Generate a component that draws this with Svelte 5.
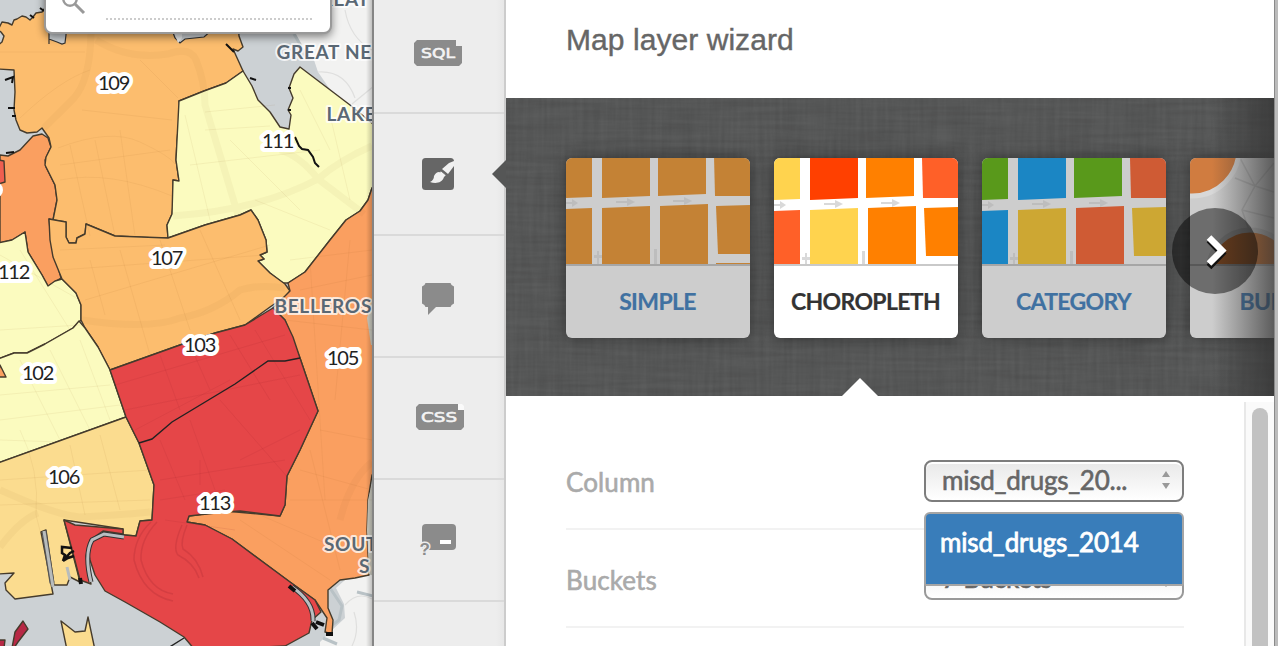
<script>
  const O = '#fcbd6e', Y = '#fbfbbf', R = '#e54648', D = '#fa9f60', T = '#fbdc8f';

  const regions = [
    { fill: D, pts: '0,155 8,156 20,150 33,136 42,134 48,138 51,147 45,160 46,167 55,185 57,200 53,220 49,219 51,240 61,278 48,286 42,275 28,252 25,232 12,240 0,243' },
    { fill: '#ef5f50', pts: '-2,160 4,161 5,182 -2,184' },
    { fill: O, pts: '-2,45 2,42 4,36 1,32 -2,30 2,22 8,23 12,25 14,20 17,19 22,16 26,17 30,20 33,17 36,13 42,12 45,8 48,6 48,-3 236,-3 239,36 243,47 238,51 233,49 243,71 226,83 204,91 179,101 180,112 177,140 176,160 179,181 173,180 173,205 172,214 167,225 168,238 155,238 115,236 86,224 85,234 77,238 76,243 69,243 66,237 66,222 53,220 57,200 55,185 45,165 46,157 51,147 49,138 42,128 37,132 27,133 20,130 16,120 14,110 15,92 14,70 -2,69' },
    { fill: Y, pts: '179,101 204,91 226,83 243,71 252,86 258,100 270,112 280,127 289,129 291,115 288,110 293,98 289,88 294,74 300,67 350,105 378,128 378,183 372,188 368,200 360,211 346,220 330,240 305,272 288,283 283,283 270,273 258,261 264,259 260,255 267,252 266,240 258,220 251,210 240,215 205,225 168,238 167,225 172,214 173,180 179,181 176,160 177,140' },
    { fill: Y, pts: '-2,243 12,240 25,232 28,252 42,275 48,286 55,281 62,279 76,293 81,305 81,320 73,328 45,344 27,353 14,353 -2,359' },
    { fill: O, pts: '49,219 66,222 66,237 69,243 76,243 77,238 85,234 86,224 115,236 168,238 205,225 240,215 251,210 258,220 266,240 267,252 260,255 264,259 258,261 270,273 285,284 290,291 286,296 270,307 245,325 215,333 180,345 110,370 98,347 85,328 81,320 81,305 76,293 62,279 53,257 50,240' },
    { fill: Y, pts: '-2,359 14,353 27,353 45,344 73,328 79,321 85,328 98,347 110,370 126,417 -2,463' },
    { fill: D, pts: '0,365 6,377 -2,377' },
    { fill: D, pts: '288,283 305,272 330,240 346,220 360,211 368,200 372,188 378,183 378,470 372,475 368,500 367,530 369,575 355,578 340,580 328,590 328,608 333,620 332,634 325,632 327,618 315,600 290,582 232,539 205,525 187,522 189,516 225,511 280,516 285,505 287,476 300,450 318,411 300,358 285,320 273,308 290,291' },
    { fill: T, pts: '-2,463 126,417 139,443 154,485 152,520 140,521 136,536 123,535 123,529 64,520 80,582 70,577 67,585 54,585 46,530 41,532 53,594 15,599 6,590 5,583 14,573 -2,574' },
    { fill: R, pts: '110,370 180,345 215,333 245,325 273,308 285,320 293,337 300,358 318,411 300,450 287,476 285,505 280,516 240,511 225,512 189,516 187,522 205,525 232,539 290,582 315,600 321,612 312,620 309,633 285,646 195,650 184,637 160,622 125,602 105,591 95,575 90,560 87,545 90,540 103,533 136,536 140,521 152,520 154,485 139,443 126,417' },
    { fill: R, pts: '64,520 75,525 123,529 123,534 103,531 90,540 86,556 91,584 80,580 73,553' },
    { fill: T, pts: '61,621 75,632 85,631 88,617 95,650 67,650' },
    { fill: '#b72945', pts: '12,648 15,632 23,621 28,629 18,642 14,648' },
    { fill: '#b72945', pts: '-2,640 5,640 4,648 -2,648' }
  ];

  const labels = [
    ['109', 113.5, 89.5], ['111', 277.5, 147.5], ['107', 166.5, 264.5], ['112', 13.5, 279],
    ['103', 199.5, 351.5], ['105', 342.5, 364.5], ['102', 37.5, 379.5], ['106', 63.5, 483.5], ['113', 214.5, 509.5]
  ];
  const places = [
    ['GREAT', 306, 6], ['GREAT NE', 276.5, 59], ['LAKE', 326.5, 121],
    ['BELLEROS', 274.5, 313], ['SOUT', 324, 551], ['S', 359, 572.5]
  ];

  const cards = [
    { name: 'SIMPLE', c: Array(8).fill('#c48235'), up: 2 },
    { name: 'CHOROPLETH', on: true, c: ['#ffd34e', '#ff4000', '#ff8000', '#ff6028', '#ff6028', '#ffd34e', '#ff8000', '#ff8000'], up: 0 },
    { name: 'CATEGORY', c: ['#59991b', '#1b86c4', '#59991b', '#cf5b34', '#1b86c4', '#cda733', '#cf5b34', '#cda733'], up: 0 },
    { name: 'BUBBLE', bubble: true, c: [], up: 0 }
  ];
  const tiles = [
    '0,0 26,0 26,41 0,42', '36,0 84,0 84,40 36,42', '92,0 140,0 140,38 92,40', '148,0 184,0 184,40 149,40',
    '0,53 26,52 26,108 0,108', '36,52 84,50 84,108 36,108', '94,50 142,48 142,108 94,108', '150,50 184,49 184,98 152,98'
  ];
</script>

<div class="app">
  <section class="map">
    <svg class="mapart" width="372" height="646" viewBox="0 0 372 646">
      <rect width="372" height="646" fill="#ccd1d4" />
      <path fill="#f2f2f1" d="M296 0V34L302 46L314 60L318 72L340 104L374 130V0Z" />
      <path fill="#f2f2f1" d="M374 574L345 580L336 588L344 604L345 618L332 630L320 642V646H374Z" />
      <path fill="none" stroke="#b9c2c6" stroke-width="3" d="M330 588l12 18-3 14-8 6m26-34l16 4m-50 42l14 6M294 34l7 12" />
      <path fill="none" stroke="#dfdfde" stroke-width="1.2" d="M345 10Q350 38 372 50M318 72Q345 70 355 98M352 104L374 86M345 605Q358 590 374 600M352 646Q360 630 354 612" />
      {#each regions as r}
        <polygon points={r.pts} fill={r.fill} stroke="#453b2c" stroke-width="1.4" stroke-linejoin="round" />
      {/each}
      <g fill="#ccd1d4" stroke="#333" stroke-width="1.2">
        <path d="M49 30V44L49 39L57 42L62 44L65 43L66 35V30ZM172 30L175 38L180 43L185 39L204 37L212 30Z" />
      </g>
      <path fill="#e9ebec" d="M174 32h8v6l-4 5Z" />
      <g fill="#c8c8bd" stroke="none">
        <path d="M367 318L374 294V345H371Z" />
        <path d="M374 475L368 500L367 530L369 574L374 576Z" />
      </g>
      <g fill="none" stroke="#8a5a20" stroke-opacity=".07" stroke-width="1">
        <path stroke-width="7" stroke-opacity=".05" d="M91 34Q90 80 74 98Q50 122 44 128M96 40Q128 60 168 54Q190 46 196 60Q205 82 205 105L238 215M173 216Q260 210 318 179Q340 160 372 146M318 179L364 214M318 179Q300 156 280 150M82 320Q150 330 180 318Q214 312 240 290Q260 284 285 288M0 490Q55 515 80 517Q120 515 150 512M0 547Q20 520 38 513M340 520Q350 480 372 462" />
        <path d="M0 52H85M20 118Q60 80 90 70M58 148Q110 128 140 142T175 164M60 165L170 150M60 180Q110 170 172 196M82 110L172 120M140 60L178 98M70 145L90 236M95 140L115 236M120 130L135 236M185 115L210 220M205 112L275 105M205 130L270 126M300 90L330 150M330 115L350 200M230 140L300 210M190 165L320 150M255 200L330 230M60 250L165 245M90 260L105 315M85 300L270 245M120 250L150 355M160 240L190 330M200 230L240 320M60 270L265 255M0 255L80 300M0 330L80 325M20 250L70 330M0 395L110 385M0 420L120 405M20 360L60 440M50 350L90 430M80 340L110 420M0 440L60 442M20 430Q40 470 36 515L50 570M70 445L85 515M100 435L120 510M0 480L150 470M0 505L150 500M290 260L372 250M300 290L372 275M310 260L325 500M350 240L335 400M285 320L372 330M320 430L372 440M300 470L372 490M290 500L372 500M240 520L330 580M260 515L330 545M310 450L340 570" />
      </g>
      <g fill="none" stroke="#8b1c28" stroke-opacity=".1" stroke-width="1">
        <path d="M115 385L285 335M125 410L300 375M135 430L230 380M160 355L180 410M190 345L210 390M230 335L270 400M255 330L310 420M160 440L185 500M190 420L215 490M220 400L290 480M160 480L285 460M160 500L225 490M200 460V485M240 460L300 430M165 520L235 530" />
        <path stroke-width="1.5" stroke-opacity=".18" d="M151 522Q134 538 134 560Q143 595 173 601M157 522Q140 540 141 560Q149 590 173 594M182 525Q172 548 178 555Q194 563 199 578M187 525Q180 542 183 549Q198 558 203 577" />
      </g>
      <path fill="none" stroke="#222" stroke-width="1.4" d="M139 443L152 439L172 422L235 384L268 361L285 361L300 358M168 648L184 638" />
      <path fill="none" stroke="#111" stroke-width="2" d="M295 137L299 146L302 149L308 150L313 157L315 163L319 167M250 78L256 80M226 44L234 52M288 88h3M288 110h3M5 80l8-3-1 6M8 108l7 0M12 116h4M30 15l4 3M40 8l4 3M6 153l8-1" />
      <g fill="none">
        <path stroke="#333" stroke-width="5" d="M124 537L104 534L92 540Q84 554 91 582M292 587Q314 602 313 621" />
        <path stroke="#b9bec1" stroke-width="3" d="M124 537L104 534L92 540Q84 554 91 582M292 587Q314 602 313 621" />
        <path stroke="#555" stroke-width="5" d="M44 531L52 583" />
        <path stroke="#b8bcbc" stroke-width="3" d="M44 531L53 587M67 567L70 580" />
        <path stroke="#111" stroke-width="2.5" d="M72 548L62 547V553L65 555L63 561L70 553L74 551M63 561L68 558L74 556" />
        <path stroke="#111" stroke-width="4" d="M289 586l6 5M312 623l5 6M316 622l8 3M80 578l1 6M326 634h7" />
      </g>
      <circle cx="-5" cy="190" r="8" fill="#fff" />
      <g class="places">
        {#each places as [t, x, y]}<text {x} {y}>{t}</text>{/each}
      </g>
      <g class="labels">
        {#each labels as [t, x, y]}<text {x} {y}>{t}</text>{/each}
      </g>
    </svg>
    <div class="search">
      <svg width="24" height="26" viewBox="0 0 24 26"><circle cx="8" cy="8" r="6.7" fill="none" stroke="#999" stroke-width="2.4" /><path d="M13 13L22 22" stroke="#999" stroke-width="3" /></svg>
      <span></span>
    </div>
  </section>

  <nav class="rail">
    <div class="tab first">
      <svg width="48" height="26" viewBox="0 0 48 26"><path fill="#8b8b8b" d="M3 0H42V6H48V23L45 26H3L0 23V3Z" /><text x="7" y="18.3" textLength="34" lengthAdjust="spacingAndGlyphs">SQL</text></svg>
    </div>
    <div class="tab">
      <svg width="32" height="32" viewBox="0 0 32 32"><rect width="32" height="32" rx="3.5" fill="#666" /><path fill="#f0f0f0" d="M32 3V8L26 16L20 11L27 5ZM19 13L24 17L22 19L18 15ZM17 14Q22 15 22 19C20 25 14 26 8 24Q12 22 12 18Q14 14 17 14Z" /><path fill="none" stroke="#666" d="M18 12L25 18" /></svg>
      <i class="notch"></i>
    </div>
    <div class="tab">
      <svg class="low" width="32" height="32" viewBox="0 0 32 32"><path fill="#8b8b8b" d="M3.5 0H28.500Q29 2.500 32 3.500V20.500Q29 21.500 28.500 24H14L6 32V24H3.500Q3 21.500 0 20.500V3.500Q3 2.500 3.500 0Z" /></svg>
    </div>
    <div class="tab">
      <svg class="css" width="48" height="26" viewBox="0 0 48 26"><path fill="#8b8b8b" d="M3 0H42V6H48V23L45 26H3L0 23V3Z" /><path fill="#fafafa" d="M42 0h4l2 2v4h-6Z" /><text x="5" y="18.3" textLength="36" lengthAdjust="spacingAndGlyphs">CSS</text></svg>
    </div>
    <div class="tab">
      <svg width="36" height="32" viewBox="0 0 36 32"><rect x="2" width="34" height="26" rx="4" fill="#8b8b8b" /><rect x="20" y="16" width="11" height="4" fill="#fff" /><text class="q" x="-.5" y="30.5">?</text></svg>
    </div>
    <div class="tab"><svg class="last" width="10" height="10"><circle cx="5" cy="5" r="4" fill="#8b8b8b" /></svg></div>
  </nav>

  <main>
    <header><h1>Map layer wizard</h1></header>
    <div class="strip">
      <svg class="linen" width="768" height="298">
        <filter id="h" x="0" y="0" width="100%" height="100%"><feTurbulence type="fractalNoise" baseFrequency=".015 .22" numOctaves="2" seed="3" /><feColorMatrix values="0 0 0 0 0  0 0 0 0 0  0 0 0 0 0  1 0 0 0 -.3" /></filter>
        <filter id="v" x="0" y="0" width="100%" height="100%"><feTurbulence type="fractalNoise" baseFrequency=".22 .015" numOctaves="2" seed="8" /><feColorMatrix values="0 0 0 0 0  0 0 0 0 0  0 0 0 0 0  1 0 0 0 -.3" /></filter>
        <rect width="768" height="298" filter="url(#h)" opacity=".14" /><rect width="768" height="298" filter="url(#v)" opacity=".12" />
      </svg>
      <div class="cards">
        {#each cards as card}
          <article class:on={card.on}>
            <svg width="184" height="106" viewBox="0 0 184 106">
              {#if card.bubble}
                <path fill="none" stroke="#999" stroke-opacity=".4" stroke-width="1.5" d="M50 0L65 28L84 5M65 28L52 52L60 75M65 28L84 34M52 52L84 60M45 20L65 28" />
                <circle cx="2" cy="-9" r="47" fill="#d07c40" stroke="#d8d8d8" stroke-width="5" />
                <circle cx="60" cy="114" r="42" fill="#c27035" stroke="#bbb" stroke-width="5" />
              {:else}
                <g transform="translate(0 {-card.up})">
                  {#each tiles as t, i}<polygon points={t} fill={card.c[i]} />{/each}
                  {#if card.name === 'SIMPLE'}<path fill={card.c[0]} d="M150 107h34v4h-34Z" />{/if}
                  <path fill="#aaa" fill-opacity=".45" d="M0 46h6v-3l6 4-6 4v-3H0ZM50 45h11v-3l8 4-8 4v-3H50ZM107 44h11v-3l8 4-8 4v-3h-11ZM31 95h2v4h3v3h-3v8h-2v-8h-3v-3h3ZM88 93h3v17h-3Z" />
                </g>
              {/if}
            </svg>
            <b>{card.name}</b>
          </article>
        {/each}
      </div>
      <div class="fade"></div>
      <div class="next"><svg width="24" height="36" viewBox="0 0 24 36"><path fill="none" stroke="#111" stroke-width="6.5" d="M4 5L17 18.5L4 32" /><path fill="none" stroke="#fff" stroke-width="6.5" d="M4 2.5L17 15.5L4 28.5" /></svg></div>
      <i class="pointer"></i>
    </div>
    <div class="body">
      <div class="form">
        <div class="row"><label for="column">Column</label>
          <div class="select focus" id="column"><span>misd_drugs_20...</span><svg width="10" height="18" viewBox="0 0 10 18"><path fill="#999" d="M5 0L9 6H1ZM1 12H9L5 18Z" /></svg>
            <div class="menu">misd_drugs_2014</div>
          </div>
        </div>
        <div class="row"><label for="buckets">Buckets</label>
          <div class="select" id="buckets"><span>7 Buckets</span><svg width="10" height="18" viewBox="0 0 10 18"><path fill="#777" d="M5 0L9 6H1ZM1 12H9L5 18Z" /></svg></div>
        </div>
      </div>
      <div class="scroll"><i></i></div>
    </div>
  </main>
  <div class="edge"></div>
</div>

<style>
  :global(body) { overflow: hidden; }
  .app { width: 1278px; height: 646px; display: flex; overflow: hidden; background: #fff; font-family: Lato, sans-serif; }
  .map { position: relative; width: 372px; height: 646px; flex: none; overflow: hidden; border-right: 2px solid #858585; }
  .map::after { content: ''; position: absolute; inset: 0 0 0 auto; width: 6px; background: linear-gradient(90deg, transparent, #0003); }
  .mapart { display: block; }
  .mapart text { paint-order: stroke; stroke: #fff; stroke-linejoin: round; }
  .labels text { font: 400 20px Lato, sans-serif; letter-spacing: -1.2px; text-anchor: middle; fill: #222; stroke-width: 8px; }
  .places text { font: 700 19px Lato, sans-serif; letter-spacing: .7px; fill: #5a6874; stroke-width: 4px; stroke-opacity: .75; }
  .search { position: absolute; left: 44px; top: -20px; box-sizing: border-box; width: 288px; height: 54px; border: 2px solid #999; border-radius: 0 0 8px 8px; background: #fff; box-shadow: 0 3px 8px #0007; }
  .search svg { position: absolute; left: 16px; top: 9px; }
  .search span { position: absolute; left: 60px; top: 36px; width: 207px; height: 2px; background: repeating-linear-gradient(90deg, #ccc 0 2px, transparent 2px 4px); }

  .rail { width: 130px; flex: none; background: linear-gradient(90deg, #ededed 122px, #e7e7e7); border-right: 2px solid #ccc; }
  .tab { position: relative; box-sizing: border-box; height: 122px; border-bottom: 2px solid #dadada; display: flex; justify-content: center; align-items: center; padding-right: 2px; }
  .tab.first { height: 114px; padding-bottom: 6px; }
  .tab text { font: 400 14.5px "DejaVu Sans", sans-serif; fill: #f4f4f4; stroke: #f4f4f4; stroke-width: .6px; }
  .tab .q { font: 700 17px "Liberation Sans", sans-serif; fill: #8b8b8b; stroke: #ededed; stroke-width: 3px; paint-order: stroke; }
  .low { margin-top: 6px; }
  .css { margin-left: 4px; margin-top: -2px; }
  .last { margin-top: -20px; }
  .notch { position: absolute; right: -2px; top: 46px; border: solid transparent; border-width: 14px 14px 14px 0; border-right-color: #555656; }

  main { width: 768px; flex: none; height: 646px; display: flex; flex-direction: column; overflow: hidden; }
  header { height: 98px; flex: none; padding-left: 60px; box-sizing: border-box; }
  h1 { margin: 0; padding-top: 22px; font: 400 30px/36px "Liberation Sans", sans-serif; color: #666; letter-spacing: .06px; -webkit-text-stroke: .4px #666; }
  .strip { position: relative; height: 298px; flex: none; box-sizing: border-box; padding: 60px 0 0 60px; overflow: hidden; background: #5b5c5c; }
  .linen { position: absolute; inset: 0; }
  .cards { position: relative; display: flex; gap: 24px; }
  article { width: 184px; height: 180px; flex: none; border-radius: 6px; overflow: hidden; background: #cdcdcd; color: #4071a1; box-shadow: 0 0 16px #0006; display: flex; flex-direction: column; }
  article svg { display: block; border-bottom: 2px solid #a6a6a6; flex: none; }
  article b { flex: 1; display: flex; align-items: center; justify-content: center; font-weight: 700; font-size: 23px; letter-spacing: -.65px; padding: 0 1px 3px 0; -webkit-text-stroke: .2px; }
  article.on { background: #fff; color: #333; }
  article.on svg { border-color: #c9c9c9; }
  .fade { position: absolute; right: 0; top: 0; width: 62px; height: 298px; background: linear-gradient(90deg, #3330, #333b); }
  .next { position: absolute; left: 666px; top: 110px; width: 86px; height: 86px; border-radius: 50%; background: #0007; }
  .next svg { position: absolute; left: 33px; top: 27px; }
  .pointer { position: absolute; left: 336px; bottom: 0; border: solid transparent; border-width: 0 18px 18px; border-bottom-color: #fff; }

  .body { flex: 1; display: flex; justify-content: space-between; }
  .form { padding: 36px 0 0 60px; width: 618px; }
  .row { height: 98px; box-sizing: border-box; display: flex; justify-content: space-between; align-items: center; border-bottom: 2px solid #f2f2f2; font-size: 26px; color: #aaa; padding-top: 2px; -webkit-text-stroke: .6px; }
  .row label { padding-top: 2px; letter-spacing: .1px; }
  .select { position: relative; width: 260px; height: 42px; box-sizing: border-box; border: 2px solid #999; border-radius: 8px; background: linear-gradient(#e8e8e8, #fff); box-shadow: inset 0 2px #fff; display: flex; justify-content: space-between; align-items: center; padding: 0 11px 2px 16px; color: #666; letter-spacing: -.25px; }
  .focus { border-color: #7d7d7d; z-index: 2; }
  .menu { position: absolute; left: -2px; top: 50px; width: 260px; height: 74px; box-sizing: border-box; border: 2px solid #a5a5a5; border-radius: 6px 6px 2px 2px; background: #397dba; color: #fff; padding: 13px 14px 0; line-height: 31px; letter-spacing: -.15px; -webkit-text-stroke: .8px; }
  .scroll { width: 30px; box-sizing: border-box; border-left: 2px solid #e8e8e8; background: #fafafa; margin-top: 6px; padding: 6px 4px 0 6px; display: flex; }
  .scroll i { flex: 1; background: #c2c2c2; border-radius: 8px 8px 0 0; margin-right: 2px; }
  .edge { width: 4px; flex: none; background: linear-gradient(90deg, #8a8a8a 1px, #bbb 1px); }
</style>
